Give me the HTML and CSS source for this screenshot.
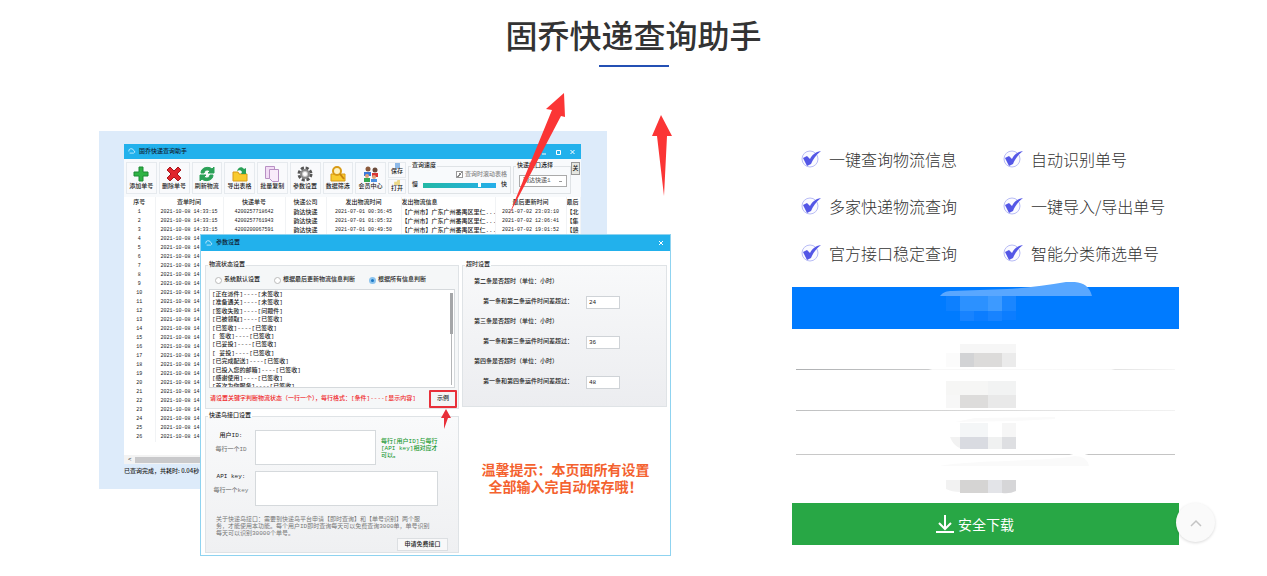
FILE: index.html
```html
<!DOCTYPE html>
<html lang="zh-CN">
<head>
  <meta charset="UTF-8" />
  <meta name="viewport" content="width=device-width, initial-scale=1.0"/>
  <title>固乔快递查询助手</title>
  <link rel="stylesheet" href="styles.css">
</head>
<body>
  <header class="page-title">
    <h1>固乔快递查询助手</h1>
    <div class="title-line"></div>
  </header>

  <main class="product">
    <div class="preview">
      <div class="preview-bg">
        <!-- main window -->
        <div class="window">
          <div class="window-title">
            <svg class="logo" viewBox="0 0 10 8"><path d="M1 4a3 3 0 0 1 6-1M2 6h5a2 2 0 0 0 1-3" fill="none" stroke="#d8f2ff"/></svg>
            <span>固乔快递查询助手</span>
            <span class="window-ctrl">
              <svg viewBox="0 0 36 8"><path d="M2 6h4M16.500 2.500h4v4h-4zM30.500 2l4 4M34.500 2l-4 4" fill="none" stroke="#fff"/></svg>
            </span>
          </div>
          <div class="toolbar">
            <div class="tools">
              <button><svg viewBox="0 0 16 16"><path d="M6 1h4v5h5v4h-5v5H6v-5H1V6h5z" fill="#2fb344" stroke="#1d8a35"/></svg>添加单号</button>
              <button><svg viewBox="0 0 16 16"><path d="M4 1l4 4 4-4 3 3-4 4 4 4-3 3-4-4-4 4-3-3 4-4-4-4z" fill="#e0262d" stroke="#a8161c"/></svg>删除单号</button>
              <button><svg viewBox="0 0 16 16"><path d="M2 7c0-6 8-7 11-4l2-2v6H9l2-2C8 3 6 4 5 7zM14 9c0 6-8 7-11 4l-2 2V9h6l-2 2c3 2 5 1 6-2z" fill="#2ba158" stroke="#2ba158"/></svg>刷新物流</button>
              <button><svg viewBox="0 0 16 16"><path d="M1 6h5l1 2h8v7H1z" fill="#f9cb2f" stroke="#d89b16"/><path d="M5 5c1-4 5-5 7-2l2-1v6H9l1-2C9 4 7 4 5 5z" fill="#2ba158"/></svg>导出表格</button>
              <button><svg viewBox="0 0 16 16"><path d="M1.500.500h9v12h-9z" fill="#f2dcf5" stroke="#b890c4"/><path d="M5.500 3.500h9v12h-6l-3-3z" fill="#f9ebfa" stroke="#b890c4"/></svg>批量复制</button>
              <button><svg viewBox="0 0 16 16"><circle cx="8" cy="8" r="6" fill="none" stroke="#555" stroke-width="3" stroke-dasharray="3 1.700"/><circle cx="8" cy="8" r="4" fill="#ccc" stroke="#888" stroke-width="2"/><circle cx="8" cy="8" r="2" fill="#fff"/></svg>参数设置</button>
              <button><svg viewBox="0 0 16 16"><path d="M1 8h14v7H1z" fill="#f9cb2f" stroke="#d89b16"/><circle cx="7" cy="5" r="4" fill="#fff3c2" stroke="#d89b16" stroke-width="2"/><path d="M10 8l4 5" stroke="#c98510" stroke-width="2"/></svg>数据筛选</button>
              <button><svg viewBox="0 0 16 16"><circle cx="5" cy="3" r="2.500" fill="#8c5a3c"/><path d="M1 6h7v4H1z" fill="#3c78d8"/><circle cx="12" cy="4" r="2.500" fill="#6a4a3a"/><path d="M9 7h6v4H9z" fill="#d93636"/><circle cx="4" cy="10" r="2" fill="#e0a47c"/><path d="M1 12h6v4H1z" fill="#34a853"/><circle cx="11" cy="11" r="2" fill="#e0a47c"/><path d="M8 13h6v3H8z" fill="#4a90e2"/></svg>会员中心</button>
            </div>
            <div class="tools-small">
              <button><svg viewBox="0 0 8 6"><path d="M1 0h6v6H1z" fill="#8db9e8"/></svg>保存</button>
              <button><svg viewBox="0 0 8 6"><path d="M0 2h3l1-2h3v6H0z" fill="#ecd98a"/></svg>打开</button>
            </div>
            <fieldset class="speed">
              <legend>查询速度</legend>
              <label class="auto-scroll"><input type="checkbox" checked>查询时滚动表格</label>
              <div class="slider">慢<input type="range" min="0" max="100" value="78" aria-label="查询速度">快</div>
            </fieldset>
            <fieldset class="port">
              <legend>快递接口选择</legend>
              <select aria-label="快递接口选择"><option>韵达快递1</option></select>
            </fieldset>
            <button class="more">关</button>
          </div>
          <table class="orders">
            <colgroup>
              <col class="c-no"><col class="c-time"><col class="c-code"><col class="c-firm"><col class="c-sent"><col class="c-info"><col class="c-upd"><col class="c-last">
            </colgroup>
            <thead>
              <tr><th>序号</th><th>查单时间</th><th>快递单号</th><th>快递公司</th><th>发出物流时间</th><th class="left">发出物流信息</th><th>最后更新时间</th><th class="left">最后</th></tr>
            </thead>
            <tbody id="orderRows"></tbody>
          </table>
          <div class="h-scroll"><span>&lt;</span><div class="h-thumb"></div></div>
        </div>
        <div class="status">已查询完成，共耗时: 0.04秒</div>
      </div>

      <!-- settings dialog -->
      <div class="dialog">
        <div class="window-title">
          <svg class="logo" viewBox="0 0 10 8"><path d="M1 4a3 3 0 0 1 6-1M2 6h5a2 2 0 0 0 1-3" fill="none" stroke="#d8f2ff"/></svg>
          <span>参数设置</span>
          <span class="window-ctrl small"><svg viewBox="0 0 8 8"><path d="M2 2l4 4M6 2l-4 4" fill="none" stroke="#fff"/></svg></span>
        </div>
        <div class="dialog-body">
          <div class="dialog-left">
            <fieldset class="state">
              <legend>物流状态设置</legend>
              <div class="radios">
                <label><input type="radio" name="state">系统默认设置</label>
                <label><input type="radio" name="state">根据最后更新物流信息判断</label>
                <label><input type="radio" name="state" checked>根据所有信息判断</label>
              </div>
              <textarea class="rules" aria-label="物流状态设置">[正在派件]----[未签收]
[准备通关]----[未签收]
[签收失败]----[问题件]
[已被领取]----[已签收]
[已签收]----[已签收]
[ 签收]----[已签收]
[已妥投]----[已签收]
[ 妥投]----[已签收]
[已完成配送]----[已签收]
[已投入您的邮箱]----[已签收]
[感谢使用]----[已签收]
[首次为你服务]----[已签收]</textarea>
              <div class="rule-tip">
                <span>请设置关键字判断物流状态（一行一个），每行格式：[条件]----[显示内容]</span>
                <button>示例</button>
              </div>
            </fieldset>
            <fieldset class="bird">
              <legend>快递鸟接口设置</legend>
              <div class="key-row">
                <label for="userId"><b>用户ID:</b>每行一个ID</label>
                <textarea id="userId" class="user-id"></textarea>
                <p>每行[用户ID]与每行<br>[API key]相对应才<br>可以。</p>
              </div>
              <div class="key-row">
                <label for="apiKey"><b>API key:</b>每行一个key</label>
                <textarea id="apiKey" class="api-key"></textarea>
              </div>
              <p class="about">关于快递鸟接口：需要到快递鸟平台申请【即时查询】和【单号识别】两个服<br>务，才能使用本功能。每个用户ID即时查询每天可以免费查询3000单，单号识别<br>每天可以识别30000个单号。</p>
              <button class="apply">申请免费接口</button>
            </fieldset>
          </div>
          <div class="dialog-right">
            <fieldset class="timeout">
              <legend>超时设置</legend>
              <p>第二条是否超时（单位：小时）</p>
              <label>第一条和第二条运件时间差超过：<input type="text" value="24"></label>
              <p>第三条是否超时（单位：小时）</p>
              <label>第一条和第三条运件时间差超过：<input type="text" value="36"></label>
              <p>第四条是否超时（单位：小时）</p>
              <label>第一条和第四条运件时间差超过：<input type="text" value="48"></label>
            </fieldset>
            <p class="warm-tip">温馨提示：本页面所有设置<br>全部输入完自动保存哦！</p>
          </div>
        </div>
      </div>

      <!-- red arrows drawn over the windows -->
      <svg class="arrows" viewBox="0 0 573 340" aria-hidden="true">
        <path d="M465 2L447 18l6 1L410 124l52-99 4 1zM562 24l-9 21h5l7 60 3-60h5z" fill="#fb3535"/>
        <path d="M347 318l-5 9h3v11l4-11h3z" fill="#e8303a"/>
      </svg>
    </div>

    <div class="info">
      <ul class="features">
        <li><svg viewBox="0 0 20 20"><use href="#tick"/></svg>一键查询物流信息</li>
        <li><svg viewBox="0 0 20 20"><use href="#tick"/></svg>自动识别单号</li>
        <li><svg viewBox="0 0 20 20"><use href="#tick"/></svg>多家快递物流查询</li>
        <li><svg viewBox="0 0 20 20"><use href="#tick"/></svg>一键导入/导出单号</li>
        <li><svg viewBox="0 0 20 20"><use href="#tick"/></svg>官方接口稳定查询</li>
        <li><svg viewBox="0 0 20 20"><use href="#tick"/></svg>智能分类筛选单号</li>
      </ul>
      <div class="versions">
        <div class="version active">
          <svg viewBox="0 0 153 48" aria-hidden="true">
            <path d="M0 14c3-4 7-5 12-5l55-2c20-1 40-4 59-7 14-1 23 2 26 14z" fill="#59a7ff"/>
            <path d="M6 14h14v15H6z" fill="#0d80ff"/>
            <path d="M20 14h28v15H20z" fill="#2c91ff"/>
            <path d="M48 14h14v15H48z" fill="#3d9aff"/>
            <path d="M62 14h14v15H62z" fill="#1a86ff"/>
            <path d="M20 29h14v10H20z" fill="#1883ff"/>
            <path d="M34 29h14v10H34z" fill="#0c7dff"/>
            <path d="M48 29h14v10H48z" fill="#1883ff"/>
            <path d="M62 29h14v9H62z" fill="#0c7dff"/>
          </svg>
        </div>
        <div class="version first">
          <svg viewBox="0 0 153 40" aria-hidden="true">
            <path d="M20 15h56v9H20z" fill="#f6f6f6"/>
            <path d="M20 24h14v14H20z" fill="#d2d3d5"/>
            <path d="M34 24h28v14H34z" fill="#dcdbda"/>
            <path d="M62 24h14v14H62z" fill="#ebebeb"/>
            <path d="M6 24h14v14H6z" fill="#fbfbfb"/>
          </svg>
        </div>
        <div class="version second">
          <svg viewBox="0 0 153 40" aria-hidden="true">
            <path d="M6 11h42v14H6z" fill="#f6f6f5"/>
            <path d="M48 11h28v14H48z" fill="#f2f3f3"/>
            <path d="M20 25h28v13H20z" fill="#dddcdb"/>
            <path d="M48 25h28v13H48z" fill="#e9e9e9"/>
            <path d="M6 25h14v13H6z" fill="#f7f7f7"/>
          </svg>
        </div>
        <div class="version third">
          <svg viewBox="0 0 153 40" aria-hidden="true">
            <path d="M15 11l20-4 80-1v2l-40 2z" fill="#fafafa"/>
            <path d="M20 12h28v14H20z" fill="#f4f6f7"/>
            <path d="M62 12h14v14H62z" fill="#f6f6f6"/>
            <path d="M10 26h10v11c-5-2-8-6-10-11z" fill="#f2f2f2"/>
            <path d="M20 26h28v12H20z" fill="#d9dbe1"/>
            <path d="M48 26h14v12H48z" fill="#f0f1f1"/>
            <path d="M62 26h14v12H62z" fill="#dedfe2"/>
          </svg>
        </div>
        <div class="version last">
          <svg viewBox="0 0 153 40" aria-hidden="true">
            <path d="M0 11c30-6 100-4 135-10q12 0 14 10z" fill="#fafafa"/>
            <path d="M6 25h14v12q-8 0-14-3z" fill="#f2f2f2"/>
            <path d="M20 25h28v13H20z" fill="#d5d4d3"/>
            <path d="M48 25h14v13H48z" fill="#e3e4e8"/>
            <path d="M62 25h14v11q-6 3-14 2z" fill="#d6d6d8"/>
          </svg>
        </div>
      </div>
      <a class="download" href="#">
        <svg viewBox="0 0 20 20"><path d="M10 1v14M4 9l6 6 6-6M1 18h18" fill="none" stroke="#fff" stroke-width="2"/></svg>
        安全下载
      </a>
    </div>
  </main>

  <button class="back-top" aria-label="返回顶部">
    <svg viewBox="0 0 12 12"><path d="M1 9l5-5 5 5" fill="none" stroke="#c4c4c4" stroke-width="1.500"/></svg>
  </button>

  <svg class="symbols" aria-hidden="true">
    <symbol id="tick" viewBox="0 0 20 20">
      <circle cx="9" cy="10" r="8" fill="#fbfbff" stroke="#b9bdf6"/>
      <path d="M2 9l4-2 3 3c2-4 5-7 11-8-5 4-8 8-10 13l-4 2z" fill="#5457e6"/>
    </symbol>
  </svg>

  <script>
    const rows = [
      ["4200257718642", "2021-07-01 00:36:45", "2021-07-02 23:03:10", "【北"],
      ["4200257761943", "2021-07-01 01:05:32", "2021-07-02 12:06:41", "【集"],
      ["4200200067591", "2021-07-01 00:49:50", "2021-07-02 19:01:52", "【赣"]
    ];
    let html = "";
    for (let i = 0; i < 26; i++) {
      html += `<tr><td>${i + 1}</td><td>2021-10-08 14:33:15</td>`;
      if (rows[i]) {
        const r = rows[i];
        html += `<td>${r[0]}</td><td>韵达快递</td><td>${r[1]}</td><td class="left">【广州市】广东广州番禺区里仁...</td><td>${r[2]}</td><td class="left">${r[3]}</td>`;
      } else {
        html += "<td></td><td></td><td></td><td></td><td></td><td></td>";
      }
      html += "</tr>";
    }
    document.getElementById("orderRows").innerHTML = html;
  </script>
</body>
</html>
```
FILE: styles.css
```css
* {
  box-sizing: border-box;
}

body {
  margin: 0;
  background: #fff;
  font-family: "Noto Sans CJK SC", "Noto Sans", sans-serif;
  color: #333;
}

h1, p, ul {
  margin: 0;
  padding: 0;
}

svg {
  display: block;
  flex-shrink: 0;
}

.symbols {
  display: none;
}

.page-title {
  padding-top: 10px;
}

.page-title h1 {
  font-size: 32px;
  line-height: 48px;
  font-weight: 500;
  text-align: center;
}

.title-line {
  width: 70px;
  height: 2px;
  margin: 7px auto 0;
  background: #2450b4;
}

.product {
  display: grid;
  grid-template-columns: 572px 1fr;
  gap: 121px;
  align-items: start;
  padding: 0 88px 0 99px;
  margin-top: 64px;
}

/* Software preview */
.preview {
  position: relative;
  padding-bottom: 68px;
  font-family: "Liberation Mono", "Noto Sans CJK SC", monospace;
  font-size: 6px;
  line-height: 8px;
  font-weight: 500;
  color: #222;
}

.preview button,
.preview input,
.preview select,
.preview textarea {
  margin: 0;
  padding: 0;
  font: inherit;
  color: inherit;
}

.preview fieldset {
  min-width: 0;
  margin: 0;
  padding: 0;
  border: 1px solid #dfe3e6;
}

.preview legend {
  margin-left: 2px;
  padding: 0 1px;
}

.preview-bg {
  width: 508px;
  height: 358px;
  padding: 13px 26px 0 25px;
  background: #ddebfa;
}

.window {
  overflow: hidden;
  background: #fff;
}

.window-title {
  display: flex;
  align-items: center;
  gap: 3px;
  height: 15px;
  padding: 0 5px 0 4px;
  background: #22b1ec;
  color: #123;
}

.logo {
  width: 8px;
  height: 7px;
}

.window-ctrl {
  margin-left: auto;
}

.window-ctrl svg {
  width: 36px;
  height: 8px;
}

.window-ctrl.small svg {
  width: 8px;
}

.toolbar {
  display: flex;
  height: 38px;
  padding: 3px 0 0 2px;
  background: #f8fafc;
}

.tools {
  display: grid;
  grid-template-columns: repeat(8, 1fr);
  gap: 2px;
  width: 260px;
  height: 32px;
}

.tools button {
  display: flex;
  flex-direction: column;
  align-items: center;
  gap: 1px;
  padding-top: 3px;
  border: 1px solid #e6eaee;
  background: #f9fafc;
  white-space: nowrap;
}

.tools svg {
  width: 16px;
  height: 16px;
}

.tools-small {
  display: grid;
  gap: 1px;
  width: 18px;
  height: 32px;
  margin-left: 2px;
}

.tools-small button {
  display: flex;
  flex-direction: column;
  align-items: center;
  border: 1px solid #e6eaee;
  background: #f9fafc;
}

.tools-small svg {
  width: 7px;
  height: 5px;
}

.speed {
  width: 103px;
  height: 32px;
}

.toolbar fieldset {
  margin-left: 2px;
}

.auto-scroll {
  display: flex;
  align-items: center;
  justify-content: flex-end;
  gap: 2px;
  height: 9px;
  padding-right: 3px;
  color: #888;
}

.auto-scroll input {
  appearance: none;
  width: 7px;
  height: 7px;
  border: 1px solid #999;
}

.auto-scroll input:checked {
  background: linear-gradient(135deg, #fff 40%, #888 40%, #888 60%, #fff 60%);
}

.slider {
  display: flex;
  align-items: center;
  gap: 5px;
  padding: 2px 3px;
}

.slider input {
  appearance: none;
  flex: 1;
  min-width: 0;
  height: 5px;
  background: linear-gradient(90deg, #22b8a5, #25aeea);
}

.slider input::-webkit-slider-thumb {
  appearance: none;
  width: 3px;
  height: 4px;
  background: #fff;
}

.port {
  width: 58px;
  height: 32px;
}

.port select {
  appearance: none;
  display: block;
  width: 48px;
  height: 12px;
  margin: 5px 0 0 5px;
  padding-left: 3px;
  border: 1px solid #aaa;
  border-radius: 0;
  background: linear-gradient(#999, #999) no-repeat right 4px center / 3px 1px, #fff;
  color: #666;
}

.toolbar .more {
  width: 9px;
  height: 13px;
  border: 1px solid #999;
  background: #e4e6e0;
}

.orders {
  width: 100%;
  table-layout: fixed;
  border-collapse: collapse;
}

.orders th,
.orders td {
  height: 9px;
  padding: 0;
  overflow: hidden;
  font-size: 5px;
  line-height: 9px;
  text-align: center;
  white-space: nowrap;
  border-right: 1px solid #f1f3f5;
}

.orders th {
  height: 11px;
  font-size: 6px;
  line-height: 11px;
  font-weight: 500;
}

.orders .left {
  text-align: left;
}

.orders td:nth-child(4),
.orders td:nth-child(6),
.orders td:nth-child(8) {
  font-size: 6px;
}

.c-no { width: 31px; }
.c-time { width: 68px; }
.c-code { width: 62px; }
.c-firm { width: 41px; }
.c-sent { width: 75px; }
.c-info { width: 94px; }
.c-upd { width: 71px; }

.h-scroll {
  display: flex;
  align-items: center;
  gap: 3px;
  height: 9px;
  margin-top: 13px;
  padding-left: 4px;
  background: #f3f3f3;
}

.h-thumb {
  flex: 1;
  height: 6px;
  background: #c9c9cb;
}

.status {
  padding-top: 3px;
  font-family: "Noto Sans CJK SC", sans-serif;
}

/* Settings dialog, lies over the main window */
.dialog {
  position: absolute;
  left: 101px;
  top: 103px;
  width: 471px;
  border: 1px solid #8fd3f0;
  background: #fff;
}

.dialog .window-title {
  height: 16px;
}

.dialog-body {
  display: grid;
  grid-template-columns: 254px 1fr;
  gap: 3px;
  padding: 10px 3px 2px 4px;
}

.dialog fieldset {
  background: #f5f7f8;
}

.radios {
  display: flex;
  gap: 14px;
  padding: 7px 9px 5px;
}

.radios label {
  display: flex;
  align-items: center;
  gap: 2px;
  white-space: nowrap;
}

.radios input {
  appearance: none;
  width: 7px;
  height: 7px;
  border: 1px solid #bbb;
  border-radius: 50%;
  background: #fff;
}

.radios input:checked {
  border: 2px solid #8cc4ee;
  background: #1976c5;
}

.dialog textarea {
  display: block;
  resize: none;
  border: 1px solid #d5d9dc;
  background: #fff;
  outline: none;
}

.dialog .rules {
  width: 246px;
  height: 99px;
  margin: 0 3px;
  padding: 1px 2px;
  line-height: 1.4;
  overflow: hidden;
  background:
    linear-gradient(#a4a6a8, #a4a6a8) no-repeat right 1px top 3px / 3px 41px,
    linear-gradient(#b4b6b8, #b4b6b8) no-repeat right 2px top 3px / 1px 92px,
    #fff;
}

.rule-tip {
  display: flex;
  justify-content: space-between;
  align-items: center;
  padding: 2px 1px 0 4px;
  color: #f01f28;
  white-space: nowrap;
}

.rule-tip button {
  width: 28px;
  height: 18px;
  border: 2px solid #e8303a;
  border-radius: 1px;
  background: #f4f5f6;
  color: #222;
}

.dialog .bird {
  margin-top: 3px;
  height: 141px;
  background: linear-gradient(#f9fafb, #eff0f2);
}

.bird legend {
  margin-bottom: 10px;
}

.key-row {
  display: flex;
  gap: 5px;
  padding-left: 6px;
  margin-bottom: 6px;
}

.key-row label {
  width: 38px;
  padding-top: 2px;
  text-align: center;
  line-height: 7px;
  color: #777;
  white-space: nowrap;
}

.key-row b {
  display: block;
  margin-bottom: 7px;
  font-weight: 500;
  color: #222;
}

.user-id {
  width: 121px;
  height: 35px;
}

.api-key {
  width: 183px;
  height: 35px;
}

.key-row p {
  padding-top: 8px;
  line-height: 7px;
  color: #12962a;
  white-space: nowrap;
}

.about {
  padding: 4px 0 0 10px;
  line-height: 7px;
  font-weight: 400;
  color: #777;
  white-space: nowrap;
}

.apply {
  display: block;
  width: 51px;
  height: 13px;
}

.bird .apply {
  margin: 1px 10px 0 auto;
  border: 1px solid #dcdfe2;
  background: #f8f8f9;
}

.dialog-right {
  display: flex;
  flex-direction: column;
}

.dialog .timeout {
  height: 146px;
  padding-top: 3px;
  background: linear-gradient(#f8f9fa, #ecedf0);
}

.timeout p {
  padding-left: 11px;
  line-height: 20px;
}

.timeout label {
  display: flex;
  align-items: center;
  gap: 13px;
  height: 20px;
  padding-left: 20px;
  white-space: nowrap;
}

.timeout input {
  width: 34px;
  height: 13px;
  border: 1px solid #cfd3d7;
  background: #fff;
}

.dialog .timeout input {
  padding-left: 2px;
}

.warm-tip {
  padding: 55px 0 0 2px;
  font-family: "Liberation Serif", "Noto Sans CJK SC", serif;
  font-size: 14px;
  line-height: 17px;
  font-weight: 700;
  text-align: center;
  color: #f4622f;
}

.arrows {
  position: absolute;
  left: 0;
  top: -40px;
  width: 573px;
  height: 340px;
  pointer-events: none;
}

/* Right column */
.features {
  display: grid;
  grid-template-columns: 202px 1fr;
  padding: 4px 0 11px 9px;
  list-style: none;
}

.features li {
  display: flex;
  align-items: center;
  gap: 8px;
  height: 47px;
  font-size: 16px;
  font-weight: 300;
  color: #333;
  white-space: nowrap;
}

.features svg {
  width: 20px;
  height: 20px;
}

.version {
  display: flex;
  justify-content: center;
  height: 44px;
  border-bottom: 1px solid transparent;
}

.version svg {
  width: 153px;
  height: 40px;
  margin-left: 62px;
}

.version.active {
  height: 42px;
  border: 0;
  background: #007bff;
}

.version.active svg {
  height: 48px;
  margin-top: -5px;
}

.version.first,
.version.second,
.version.third {
  margin: 0 4px;
  border-image: linear-gradient(90deg, #aeb0b2 0%, #c9cacb 35%, #f7f7f7 36%, #f9f9f9 83%, #e2e2e2 84%, #f6f6f6) 1;
}

.version.first,
.version.second {
  height: 41px;
}

.version.second {
  border-image: linear-gradient(90deg, #bfc0c1, #d5d5d5 40%, #f2f2f2) 1;
}

.version.third {
  border-image: linear-gradient(90deg, #c8c8c8 72%, #fff 73%, #fff 76%, #c4c4c4 77%) 1;
}

.version.last {
  height: 48px;
}

.download {
  display: flex;
  align-items: center;
  justify-content: center;
  gap: 3px;
  height: 42px;
  padding-right: 22px;
  background: #28a745;
  color: #fff;
  font-size: 14px;
  text-decoration: none;
}

.download svg {
  width: 20px;
  height: 20px;
}

.back-top {
  position: fixed;
  right: 52px;
  bottom: 34px;
  display: flex;
  align-items: center;
  justify-content: center;
  width: 39px;
  height: 39px;
  padding: 0;
  border: 0;
  border-radius: 50%;
  background: #fafafa;
  box-shadow: 0 1px 3px rgba(0, 0, 0, 0.15);
  cursor: pointer;
}

.back-top svg {
  width: 12px;
  height: 12px;
}
```
